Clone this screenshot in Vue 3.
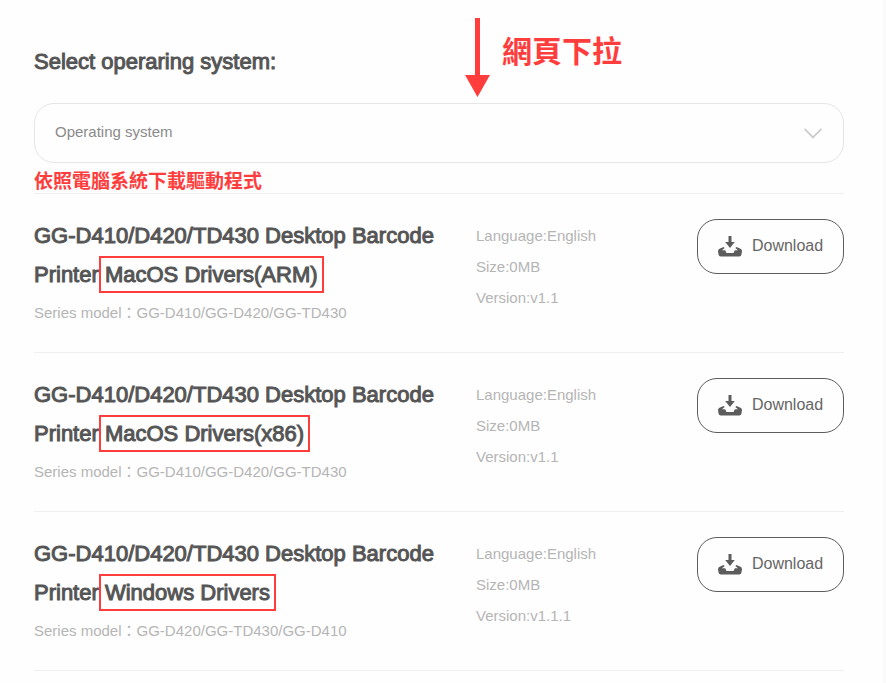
<template>
  <main class="page">
    <header class="page-head">
      <label class="page-title" for="os">Select operaring system:</label>
      <div class="scroll-note">
        <svg class="arrow" width="25" height="79" viewBox="0 0 25 79" aria-hidden="true">
          <path d="M10 0h5v57h10L12.500 79 0 57h10z" fill="#ff3d3d" />
        </svg>
        <span>網頁下拉</span>
      </div>
    </header>

    <div class="select-box">
      <select id="os" v-model="system">
        <option value="">Operating system</option>
        <option v-for="name in systems" :key="name" :value="name">{{ name }}</option>
      </select>
      <svg class="chevron" width="18" height="11" viewBox="0 0 18 11" aria-hidden="true">
        <path d="M.5.800 9 9.500 17.500.800" fill="none" stroke="#ccc" stroke-width="1.800" />
      </svg>
    </div>

    <p class="hint">依照電腦系統下載驅動程式</p>

    <ul class="drivers">
      <li v-for="driver in drivers" :key="driver.name" class="driver">
        <div class="info">
          <h2 class="name">
            <span>GG-D410/D420/TD430 Desktop Barcode</span>
            {{ ' ' }}
            <span>Printer</span>
            {{ ' ' }}
            <span class="mark">{{ driver.name }}</span>
          </h2>
          <p class="series">Series model：{{ driver.series }}</p>
        </div>
        <div class="meta">
          <p>Language:English</p>
          <p>Size:0MB</p>
          <p>Version:{{ driver.version }}</p>
        </div>
        <button class="download" type="button">
          <svg width="24" height="21" viewBox="0 0 24 21" aria-hidden="true">
            <g fill="#5c5c5c">
              <path d="M10.500 0h3v6h3.300L12 12 7.200 6h3.300z" />
              <path
                d="M5.500 11 1.500 12.800Q0 13.500 0 15.200L.6 18.800Q.9 20.500 2.800 20.500h18.400q1.900 0 2.200-1.700l.6-3.600q0-1.700-1.500-2.400L18.500 11l-1.200 1.100 2.700 2.200h-3.200l-1.300 2.700H8.500l-1.300-2.700H4l2.700-2.200z"
              />
            </g>
          </svg>
          <span>Download</span>
        </button>
      </li>
    </ul>
  </main>
</template>

<script setup>
import { ref } from 'vue'

const system = ref('')
const systems = ['MacOS', 'Windows']

const drivers = [
  { name: 'MacOS Drivers(ARM)', series: 'GG-D410/GG-D420/GG-TD430', version: 'v1.1' },
  { name: 'MacOS Drivers(x86)', series: 'GG-D410/GG-D420/GG-TD430', version: 'v1.1' },
  { name: 'Windows Drivers', series: 'GG-D420/GG-TD430/GG-D410', version: 'v1.1.1' },
]
</script>

<style>
body {
  background: #fefefe;
}
</style>

<style scoped>
.page {
  box-sizing: border-box;
  min-height: 100vh;
  padding: 0 39px 0 34px;
  border-right: 3px solid #fafafa;
  font-family: 'Liberation Sans', 'Noto Sans CJK TC', sans-serif;
  font-size: 15px;
  color: #b5b5b5;
}

p,
h2,
ul {
  margin: 0;
  padding: 0;
}

.page-head {
  position: relative;
  padding: 42px 0 22px;
}

.page-title {
  display: block;
}

.page-title,
.name {
  color: #555;
  font-size: 22px;
  font-weight: 400;
  line-height: 39px;
  -webkit-text-stroke: 1px #555;
}

/* red annotations */
.scroll-note {
  position: absolute;
  top: 18px;
  left: 431px;
  display: flex;
  gap: 12px;
  color: #ff3d3d;
  font-size: 30px;
  font-weight: 700;
  line-height: 68px;
}

.hint {
  padding: 8px 0 0;
  color: #ff3d3d;
  font-size: 19px;
  font-weight: 700;
  line-height: 22px;
}

.mark {
  margin: 0 -6px;
  padding: 4px;
  border: 2px solid #ff3d3d;
}

.select-box {
  position: relative;
}

.select-box select {
  display: block;
  width: 100%;
  height: 60px;
  padding: 0 60px 4px 20px;
  border: 1px solid #e5e5e5;
  border-radius: 20px;
  background: transparent;
  color: #8a8a8a;
  font: inherit;
  appearance: none;
}

.chevron {
  position: absolute;
  top: 25px;
  right: 22px;
  pointer-events: none;
}

.drivers {
  list-style: none;
  border-top: 1px solid #f0f0f0;
}

.driver {
  display: grid;
  grid-template-columns: minmax(0, 1fr) 221px 147px;
  align-items: start;
  padding: 22px 0 24px;
  border-bottom: 1px solid #f0f0f0;
}

.series,
.meta {
  line-height: 31px;
}

.series {
  margin-top: 3px;
}

.meta {
  padding-top: 4px;
}

.download {
  display: flex;
  align-items: center;
  justify-content: center;
  gap: 10px;
  height: 55px;
  margin-top: 3px;
  padding: 0 0 1px;
  border: 1px solid #5c5c5c;
  border-radius: 20px;
  background: transparent;
  color: #666;
  font: inherit;
  font-size: 16px;
  cursor: pointer;
}
</style>
